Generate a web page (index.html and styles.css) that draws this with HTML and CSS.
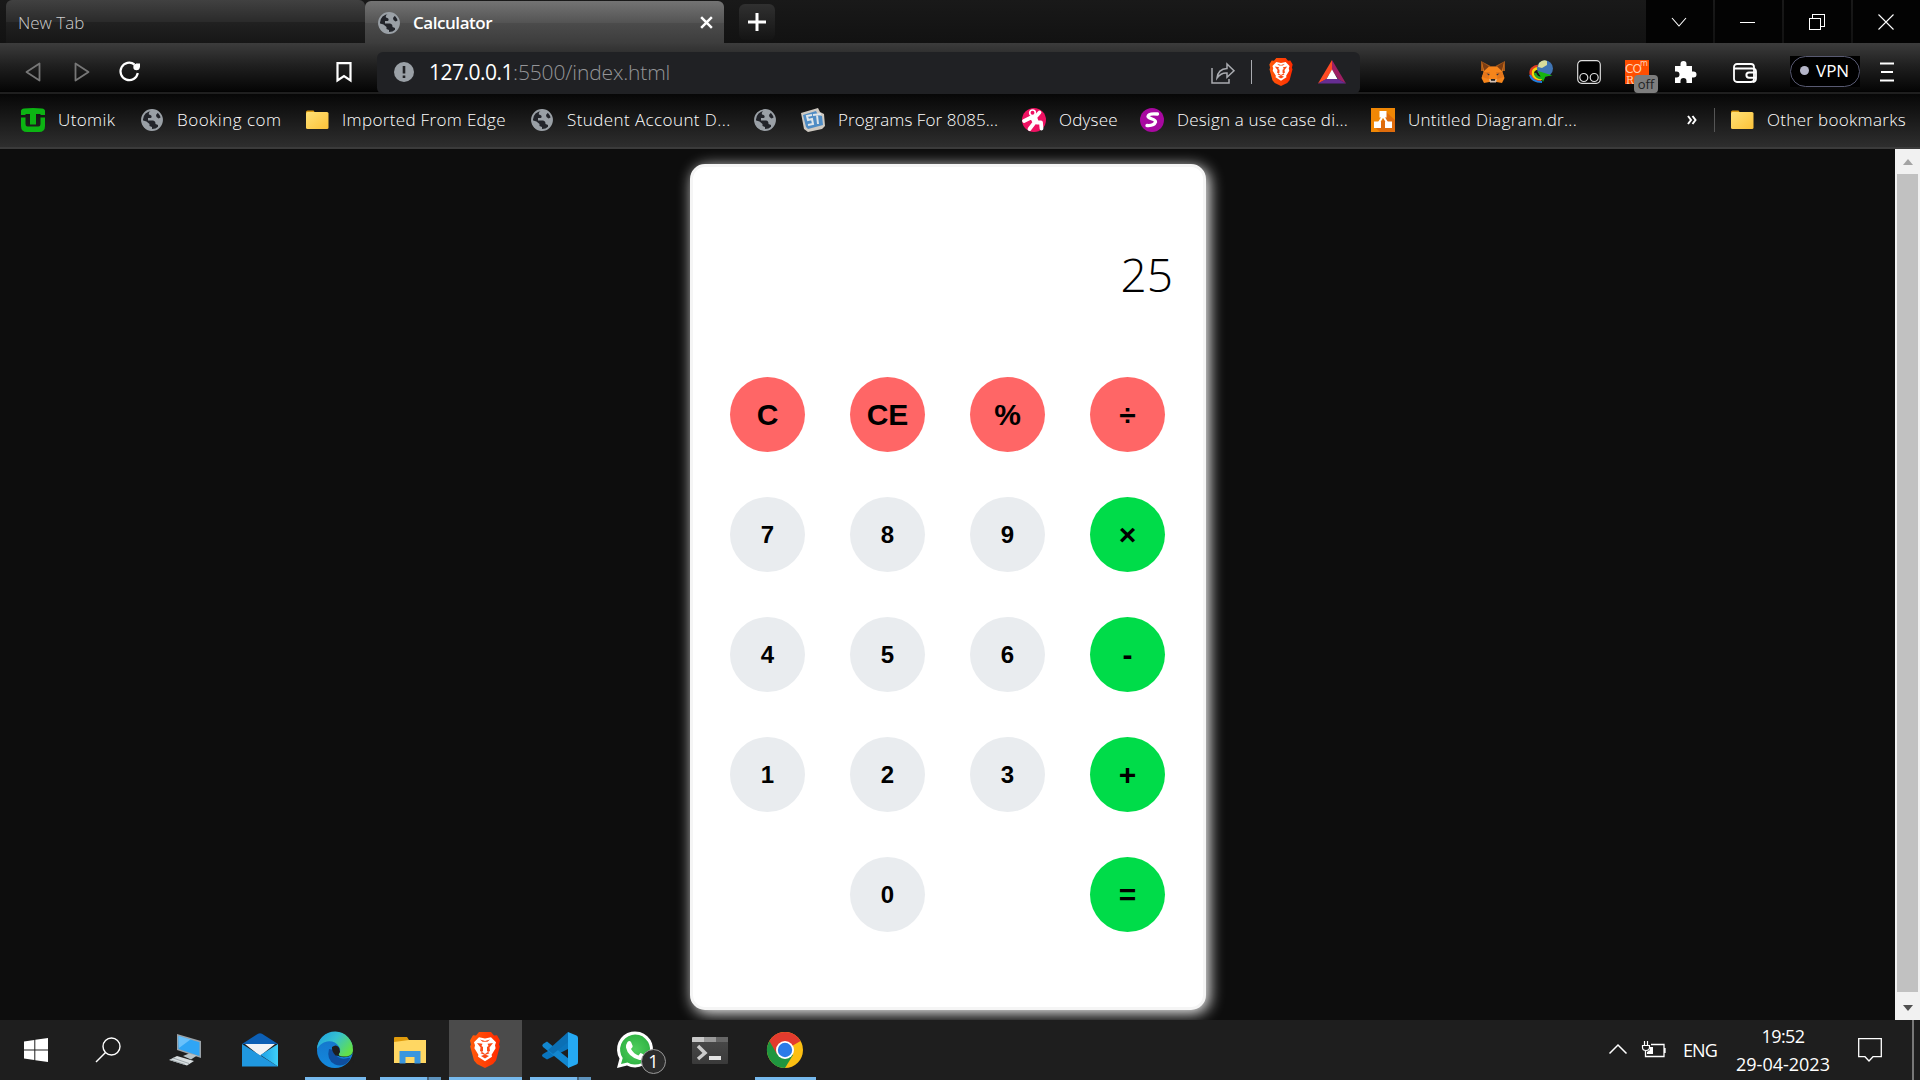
FILE: index.html
```html
<!DOCTYPE html>
<html lang="en">
<head>
<meta charset="utf-8">
<title>Calculator</title>
<link rel="stylesheet" href="styles.css">
</head>
<body>
<svg class="defs" width="0" height="0">
  <defs>
    <symbol id="globe" viewBox="0 0 24 24"><circle cx="12" cy="12" r="10" fill="#22242a" stroke="#9aa0a6" stroke-width="1.8"/><path fill="#9aa0a6" d="M12 1.5C9 4 8.500 5 9 6.500c2 .5 3 1 2.500 2.800-.3 1-2 .8-3.500.8v2.500h5c2 .2 2.600 1.800 2.500 3.400l2.500 1V20A10.500 10.500 0 0 0 22 9l-3.500 1.500-2-1.500-.5-2 2-2.500A10.500 10.500 0 0 0 12 1.500zM1.500 12l5 1.500 3 2.500v2l2.500 1v3.500A10.500 10.500 0 0 1 1.500 12z"/></symbol>
    <symbol id="folder" viewBox="0 0 24 24"><path fill="#d99a12" d="M1 4q0-1.500 1.500-1.500h6L10 4.500V9H1z"/><rect x="1" y="4" width="22.500" height="17" rx="1.500" fill="url(#fold)"/></symbol>
    <symbol id="brave" viewBox="0 0 30 36"><path fill="url(#brv)" d="M9 0h12l3 3.500 3-.3 3 5.300-1 4 .8 2-3.800 14L23 32l-8 4-8-4-3-3.500L.2 14.500 1 12.500 0 8.500l3-5.300 3 .3z"/><path fill="#fff" d="M15 6.500l6-1.200 5 5-1 3 .6 3-4 6.500.4 2-7 4.500-7-4.500.4-2-4-6.500.6-3-1-3 5-5z"/><path fill="#fb4a16" d="M7 11l5.500.8-1 2.200 1.500 1v4l-2.500 2.300 4.500 1.600 4.500-1.600L17 19v-4l1.500-1-1-2.200L23 11l-3.500 4.500.5 3.500-3 1.500L15 22l-2-1.500-3-1.500.5-3.500zM11 24l4-1.500 4 1.500-4 2.500zM10 7.500l5 1.500 5-1.500-2.500 2.300h-5z"/></symbol>
    <linearGradient id="fold" x2="1" y2="1"><stop stop-color="#ffe177"/><stop offset="1" stop-color="#fcc238"/></linearGradient>
    <linearGradient id="brv"><stop stop-color="#ff5a0a"/><stop offset="1" stop-color="#ff2a00"/></linearGradient>
    <linearGradient id="eg" x1="0" y1="0" x2="1" y2=".6"><stop stop-color="#1b9de2"/><stop offset=".5" stop-color="#35c1d0"/><stop offset="1" stop-color="#62e04a"/></linearGradient>
    <linearGradient id="eb" x2="0" y2="1"><stop stop-color="#1572c8"/><stop offset="1" stop-color="#1389de"/></linearGradient>
    <linearGradient id="ml"><stop stop-color="#1c9ee6"/><stop offset="1" stop-color="#3fd0f8"/></linearGradient>
    <linearGradient id="term" x2="0" y2="1"><stop stop-color="#4a4a4a"/><stop offset="1" stop-color="#3a3a3a"/></linearGradient>
    <radialGradient id="wg"><stop stop-color="#4fce5d"/><stop offset="1" stop-color="#32b545"/></radialGradient>
  </defs>
</svg>

<header class="tabstrip">
  <div class="tab">New Tab</div>
  <div class="tab tab-active">
    <svg class="tab-icon"><use href="#globe"/></svg>
    <span class="tab-title">Calculator</span>
    <svg class="tab-close" viewBox="0 0 14 14"><path d="M2 2l10 10M12 2L2 12" stroke="#fff" stroke-width="2.300"/></svg>
  </div>
  <div class="new-tab"><svg width="18" height="18" viewBox="0 0 18 18"><path d="M9 0v18M0 9h18" stroke="#fff" stroke-width="3"/></svg></div>
  <div class="window-buttons">
    <div><svg width="16" height="10" viewBox="0 0 16 10"><path d="M1 1l7 8 7-8"/></svg></div>
    <div><svg width="16" height="10" viewBox="0 0 16 10"><path d="M0 5.500h15" class="crisp"/></svg></div>
    <div><svg width="16" height="16" viewBox="0 0 16 16"><path d="M.5 4.500h11v11H.5zM3.500 4V.5h12v12h-4" class="crisp"/></svg></div>
    <div><svg width="16" height="16" viewBox="0 0 16 16"><path d="M.5 .5l15 15M15.500 .5l-15 15"/></svg></div>
  </div>
</header>

<nav class="toolbar">
  <div class="nav-buttons">
    <svg width="17" height="20" viewBox="0 0 17 20"><path d="M14.500 1.500v17L1.500 10z" fill="none" stroke="#777" stroke-width="1.800" stroke-linejoin="round"/></svg>
    <svg width="17" height="20" viewBox="0 0 17 20"><path d="M2.500 1.500v17L15.500 10z" fill="none" stroke="#777" stroke-width="1.800" stroke-linejoin="round"/></svg>
    <svg class="reload" width="22" height="22" viewBox="0 0 22 22"><path d="M15.500 3.500A8.700 8.700 0 1 0 18.800 12" fill="none" stroke="#fff" stroke-width="2.200"/><circle cx="17.500" cy="6" r="3.200" fill="#fff"/><path d="M17 2.500h4V7z" fill="#fff"/></svg>
  </div>
  <svg class="save" width="16" height="20" viewBox="0 0 16 20"><path d="M1.500 1.200h13v17.300L8 14l-6.500 4.500z" fill="none" stroke="#fff" stroke-width="2.200"/></svg>
  <div class="address">
    <svg width="20" height="20" viewBox="0 0 20 20"><circle cx="10" cy="10" r="10" fill="#9aa0a6"/><path d="M10 4v7.500M10 13.500V16" stroke="#202124" stroke-width="2.600"/></svg>
    <div class="url"><span class="host">127.0.0.1</span><span class="path">:5500/index.html</span></div>
    <svg width="24" height="23" viewBox="0 0 24 23" fill="none" stroke="#a9abb0" stroke-width="1.500"><path d="M1 7v15h17v-4"/><path d="M6 17q1-9 10-9.500V3l7 6.800-7 6.500v-4.300q-6-.5-10 5z"/></svg>
    <i class="divider"></i>
    <svg class="shield" width="24" height="28"><use href="#brave"/></svg>
    <svg class="bat" width="28" height="24" viewBox="0 0 28 24"><path d="M14 0v10L8 19.500 0 23.500z" fill="#ff4b24"/><path d="M14 0l14 23.500-7.500-4L14 10z" fill="#9e1f63"/><path d="M0 23.500L8 19h12l8 4.500z" fill="#662d91"/><path d="M14 9.500l5.500 9.500h-11z" fill="#fff"/></svg>
  </div>
  <div class="extensions">
    <svg viewBox="0 0 24 24"><path fill="#a55a1c" d="M0 1l9.500 5h5L24 1v10H0z"/><path fill="#f6851b" d="M1 3l8 4h6l8-4-1.500 9L23.500 18 21 23l-5.500-1h-7L3 23 .5 18 2.500 12z"/><path fill="#7c3d12" d="M1 2l7 4.500L3 11zM23 2l-7 4.500L21 11z"/><path fill="#e4761b" d="M3 12h6l-1.500 7L1 17zM21 12h-6l1.500 7 6.500-2z"/><path fill="#233447" d="M5.500 13.500l3 .5-.5 1.500zM18.500 13.500l-3 .5.500 1.500z"/><path fill="#d7c1b3" d="M8 19l1 3.500h6l1-3.500-2 1h-4z"/><path fill="#222" d="M10 19h4v1.800h-4z"/></svg>
    <svg viewBox="0 0 24 24"><path d="M10 6Q1 7 2 14t10 6" fill="none" stroke="#e33b22" stroke-width="3"/><path d="M10 8Q3 9 4 14t9 5" fill="none" stroke="#f6d90b" stroke-width="2.500"/><path d="M6 13q1 5 7 5" fill="none" stroke="#23a82a" stroke-width="2.500"/><path d="M1 15q2 7 12 7" fill="none" stroke="#1d7fe2" stroke-width="2"/><circle cx="16" cy="8.500" r="8" fill="#3f74b4"/><path d="M10 3q4-4 8-2l0 4-5 3-4-1z" fill="#d9dc9a"/><path d="M9 11l14.500 4.500-7 1L14 22z" fill="#16b50e"/></svg>
    <svg viewBox="0 0 24 24" fill="none" stroke="#ddd" stroke-width="1.200"><rect x=".7" y=".7" width="22.600" height="22.600" rx="4" fill="#000"/><circle cx="6.800" cy="17.500" r="4"/><circle cx="17.200" cy="17.500" r="4"/></svg>
    <div class="cors"><svg viewBox="0 0 24 24"><path fill="#ff4e00" d="M0 0h24v24H0z"/><g fill="#ffd3b5" font-family="DejaVu Sans"><text x="0" y="13" font-size="12" textLength="17">CO</text><text x="15" y="6" font-size="8">m</text><text x="1" y="23.500" font-size="10.500" font-family="DejaVu Serif">R</text></g></svg><span class="off">off</span></div>
    <svg viewBox="0 0 24 24"><path fill="#fff" d="M2 6h5.500V4a3 3 0 0 1 6 0v2H19v5.500h1.500a3 3 0 0 1 0 6H19V23h-5.500v-2a3 3 0 0 0-6 0v2H2v-5.500h1.500a3 3 0 0 0 0-6H2z"/></svg>
  </div>
  <svg class="wallet" width="24" height="20" viewBox="0 0 24 20" fill="none" stroke="#fff" stroke-width="1.800"><rect x="1" y="1" width="20" height="18" rx="3"/><path d="M1 5.500h18q4 0 4 3v7q0 3-3 3.500"/><path d="M23 9.500h-7a2.600 2.600 0 0 0 0 5.200H23" stroke-width="2"/></svg>
  <div class="vpn-box"><div class="vpn"><i></i><span>VPN</span></div></div>
  <svg class="menu" width="14" height="20" viewBox="0 0 14 20"><path d="M0 1.500h14M1 10h12M0 18.500h14" stroke="#fff" stroke-width="2.200"/></svg>
</nav>

<nav class="bookmarks">
  <a><svg viewBox="0 0 24 24"><path fill="#0cb413" d="M0 7V3Q0 1 3 .5q9-1 18 0 3 .5 3 2.500v4h-4.500V6H15v10.500H9V6H4.500v1zM0 9.500h4.500V16q0 2.500 2 2.500h11q2 0 2-2.500V9.500H24V18q0 6-6 6H6q-6 0-6-6z"/></svg><span class="label utomik">Utomik</span></a>
  <a><svg><use href="#globe"/></svg><span class="label booking">Booking com</span></a>
  <a><svg><use href="#folder"/></svg><span class="label imported">Imported From Edge</span></a>
  <a><svg><use href="#globe"/></svg><span class="label student">Student Account D...</span></a>
  <a><svg><use href="#globe"/></svg></a>
  <a><svg viewBox="0 0 24 24"><path fill="#cfcac2" d="M0 5L17 0l2 4 4 2 1 12-3 3-14 3-4-3z"/><path fill="#4f8cc4" d="M2 7l13-4 2 4 4 1 1 9-15 4-2-2z"/><path d="M11 7l-5 1 1 4 4-1 1 5-5 1M12 7l8-1M16 7l1 9" fill="none" stroke="#dfe6ea" stroke-width="2"/></svg><span class="label programs">Programs For 8085...</span></a>
  <a><svg viewBox="0 0 24 24"><circle cx="12" cy="12" r="12" fill="#ee1162"/><circle cx="10.500" cy="4.800" r="2.800" fill="none" stroke="#fff" stroke-width="1.700"/><path d="M2 13l7-3.500 4 0 4.500-5M10 9.500l2.500 5-5 6.500M13 9l2 5.500h4l.5 6" fill="none" stroke="#fff" stroke-width="3.800" stroke-linecap="round" stroke-linejoin="round"/></svg><span class="label odysee">Odysee</span></a>
  <a><svg viewBox="0 0 24 24"><circle cx="12" cy="12" r="12" fill="#a808a0"/><path d="M17.500 6q-9-1-9.500 2.500c0 2.500 8 2 7.500 5.500Q14 18 7 17.500" fill="none" stroke="#fff" stroke-width="3.300" stroke-linecap="round"/></svg><span class="label design">Design a use case di...</span></a>
  <a><svg viewBox="0 0 24 24"><path fill="#f08705" d="M0 0h24v24H0z"/><path fill="#df6c0c" d="M15 4l9 8v12H9l-5-5 8-7z"/><path d="M12 8l-5 8M12 8l5 8" stroke="#fff" stroke-width="2"/><path fill="#fff" d="M8.500 3h7v6.500h-7zM3 13.500h7V20H3zM14 13.500h7V20h-7z"/></svg><span class="label untitled">Untitled Diagram.dr...</span></a>
  <div class="other">
    <svg class="more" viewBox="0 0 10 10"><path d="M1 1l3 4-3 4M5.500 1l3 4-3 4" fill="none" stroke="#fff" stroke-width="2"/></svg>
    <i></i>
    <a><svg><use href="#folder"/></svg><span class="label rest">Other bookmarks</span></a>
  </div>
</nav>

<main class="page">
  <section class="viewport">
    <div class="calculator">
      <div class="display">25</div>
      <div class="keys">
        <button class="op red">C</button><button class="op red">CE</button><button class="op red percent">%</button><button class="op red">÷</button>
        <button>7</button><button>8</button><button>9</button><button class="op green">×</button>
        <button>4</button><button>5</button><button>6</button><button class="op green">-</button>
        <button>1</button><button>2</button><button>3</button><button class="op green">+</button>
        <button class="zero">0</button><button class="op green equals">=</button>
      </div>
    </div>
  </section>
  <aside class="scrollbar"><i class="up"></i><div class="thumb"></div><i class="down"></i></aside>
</main>

<footer class="taskbar">
  <div class="slot small"><svg width="24" height="24" viewBox="0 0 24 24"><path fill="#fff" d="M0 3.400L10.300 2v9.500H0zM11.300 1.800L24 0v11.500H11.300zM0 12.500h10.300V22L0 20.600zM11.300 12.500H24V24l-12.700-1.800z"/></svg></div>
  <div class="slot search"><svg width="26" height="26" viewBox="0 0 26 26"><circle cx="16.500" cy="9.500" r="8.500" fill="none" stroke="#fff" stroke-width="1.400"/><path d="M10.500 15.500L1 25" stroke="#fff" stroke-width="1.500"/></svg></div>
  <div class="slot"><svg width="32" height="32" viewBox="0 0 32 32"><path fill="#9aa2a8" d="M8 0l24 7v17L8 16z"/><path fill="#2fa5f5" d="M9.500 2l21 6.300v13.800L9.500 15z"/><path fill="#69c1fb" d="M9.500 2l12 3.600L10 14z"/><path fill="#b8c3c7" d="M14 22l6-2.500 8 2-6 4z"/><path fill="#d9dfe1" d="M0 26l8-4 17 5-7 4.500z"/><path d="M4 24l16 5.500M2 26l14 4.500" stroke="#9da6aa"/></svg></div>
  <div class="slot"><svg width="36" height="34" viewBox="0 0 36 34"><path fill="#0c5fb5" d="M0 11L16 .8q2-1.200 4 0L36 11z"/><path fill="#f1f3f6" d="M3 11h30L18 23z"/><path fill="#2098e0" d="M0 11l36 22.500H0z"/><path fill="url(#ml)" d="M36 11v22.500L18.500 22z"/></svg></div>
  <div class="slot wide run"><svg width="36" height="36" viewBox="0 0 36 36"><circle cx="18" cy="18" r="18" fill="url(#eb)"/><path fill="#0f4e9e" d="M12 17q-3 11 6 15.500Q28 36 33 27q1-2-2-1-12 3-14-8z"/><path fill="#1e1e1e" d="M36.500 20q-2 3.500-5 4.500-8 2-12-2-2-3 0-6l5 4 11-6 3 1v5zM34 26.500l3-4-1 8z"/><path fill="url(#eg)" d="M0 17A18 18 0 0 1 36 18c0 6-6 7-10 6.500q-5-.5-4.500-2 3-4 .5-8Q18 8.500 10 9.500 3 11 0 17z"/><path fill="#1e1e1e" d="M15 15q4-3 6.500 0t0 7.500q0 1.500 3 2l-6-1q-4-4-3.500-8.500z"/></svg></div>
  <div class="slot wide run stack"><svg width="33" height="27" viewBox="0 0 33 27"><path fill="#e09b0c" d="M0 1q0-1 1-1h12l2 3v4H0z"/><path fill="#ffd763" d="M0 5l15-2h17v23H0z"/><path fill="#3a96dd" d="M5.500 14h21v12.500h-6V20h-9v6.500h-6z"/></svg></div>
  <div class="slot active"><svg width="30" height="36"><use href="#brave"/></svg></div>
  <div class="slot wide run stack"><svg width="36" height="36" viewBox="0 0 36 36"><path fill="#0a75bd" d="M26 7v10L5 27.500l-4-2.500q-2-1.500 0-3z"/><path fill="#1287d0" d="M1 12l4-2.500L27 27v9L1 15q-1.500-1.500 0-3z"/><path fill="#0b70b5" d="M26 0v10L11 22l-5-4z"/><path fill="#25a9f3" d="M26 0l8.500 3.500Q36 4 36 6v24q0 2-1.500 2.500L26 36z"/></svg></div>
  <div class="slot whatsapp"><svg width="36" height="36" viewBox="0 0 36 36"><path fill="#fff" d="M0 36l2.500-9.500A18 18 0 1 1 10 33.500z"/><path fill="url(#wg)" d="M4 32l1.700-6A15 15 0 1 1 10.500 30.500z"/><path fill="#fff" d="M10.500 10q2-2 3.500 0l1.700 4q.3 1-1.700 3 3 5 7.500 6.500l2-2.500q1 0 5 2.500-.5 5-6 4.500Q11 25 9 15.500q-.2-3 1.500-5.500z"/></svg><span class="badge">1</span></div>
  <div class="slot"><svg width="36" height="27" viewBox="0 0 36 27"><rect width="36" height="27" rx="1" fill="url(#term)"/><path fill="#c8c8c8" d="M0 1q0-1 1-1h11v5H0z"/><path fill="#999" d="M12 0h12v5H12z"/><path fill="#666" d="M24 0h12v5H24z"/><path d="M6 9l7 7-7 6" fill="none" stroke="#ccc" stroke-width="3.500"/><path fill="#e3e3e3" d="M17 19h12v4H17z"/></svg></div>
  <div class="slot wide run"><svg width="36" height="36" viewBox="0 0 36 36"><circle cx="18" cy="18" r="18" fill="#fcbf12"/><path fill="#e33b2e" d="M18 18L2.400 9A18 18 0 0 1 33.600 9z"/><path fill="#1f963f" d="M18 18L2.400 9A18 18 0 0 0 18 36l8-13z"/><path fill="#e33b2e" d="M2.400 9l7.800 13.500L18 9z"/><circle cx="18" cy="18" r="9" fill="#fff"/><circle cx="18" cy="18" r="7.200" fill="#2a7be8"/></svg></div>
  <div class="tray">
    <svg width="18" height="10" viewBox="0 0 18 10"><path d="M.5 9.500L9 1l8.500 8.500" fill="none" stroke="#fff" stroke-width="1.500"/></svg>
    <svg width="24" height="17" viewBox="0 0 24 17"><path d="M9 3.500h13v12H3.500V10M23 7v5" fill="none" stroke="#fff" stroke-width="1.300"/><path d="M.5 4.500h7v2q0 3-3.500 3T.5 6.500zM2.500 0v4M5.500 0v4" fill="none" stroke="#fff" stroke-width="1.200"/><path fill="#fff" d="M8 6h3v7H5v-2l3-2z"/></svg>
    <span class="lang">ENG</span>
    <div class="clock"><span class="time">19:52</span><span>29-04-2023</span></div>
    <svg class="note" width="24" height="24" viewBox="0 0 24 24"><path d="M.7 .7h22.600v18H15L11 23l-4-4.300H.7z" fill="none" stroke="#fff" stroke-width="1.300"/></svg>
    <i class="peek"></i>
  </div>
</footer>
</body>
</html>
```
FILE: styles.css
```css
* { box-sizing: border-box; }
body { margin: 0; width: 1920px; height: 1080px; overflow: hidden; display: flex; flex-direction: column; background: #0d0d0d; color: #fff; font-family: "Open Sans", sans-serif; font-size: 17px; white-space: nowrap; }
svg { display: block; flex: none; overflow: visible; }
.defs { position: absolute; }

.tabstrip { height: 43px; flex: none; display: flex; padding-left: 6px; background: linear-gradient(#191919, #121212); }
.tab { width: 359px; height: 43px; padding-left: 12px; line-height: 45px; font-weight: 300; color: #ccc; border-radius: 6px 6px 0 0; background: linear-gradient(#414141, #2b2b2b 50%, #212121 52%, #161616); }
.tab-active { position: relative; z-index: 1; width: 359px; height: 43px; margin-top: 1px; display: flex; align-items: center; padding: 0 10px 0 12px; line-height: 41px; color: #fff; font-weight: 600; background: linear-gradient(#747474, #545454 50%, #4b4b4b 52%, #3c3c3c); }
.tab-icon { width: 24px; height: 24px; }
.tab-title { flex: 1; margin-left: 12px; letter-spacing: -.45px; }
.tab-close { width: 15px; height: 15px; }
.new-tab { width: 36px; height: 36px; margin: 4px 0 0 15px; border-radius: 6px; display: grid; place-items: center; background: linear-gradient(#303030, #141414); }
.window-buttons { margin-left: auto; display: flex; gap: 2px; }
.window-buttons div { width: 67px; height: 43px; display: grid; place-items: center; background: #030303; }
.window-buttons svg { margin: 0 1px 0 0; }
.window-buttons path { fill: none; stroke: #fff; stroke-width: 1.1; }
.window-buttons .crisp { stroke-width: 1; shape-rendering: crispEdges; }

.toolbar { height: 51px; flex: none; display: flex; align-items: center; padding-left: 25px; background: linear-gradient(#3c3c3c, #1f1f1f 45%, #050505 94%, #000 95%, #1f1f1f 96%); }
.nav-buttons { display: flex; align-items: center; gap: 31px; padding-top: 7px; }
.nav-buttons .reload { margin-left: -2px; }
.save { margin: 7px 0 0 195px; }
.address { width: 983px; height: 42px; margin: 8px 0 0 25px; padding: 0 14px 1px 17px; display: flex; align-items: center; border-radius: 6px; background: #202124; font-size: 21px; }
.url { flex: 1; margin-left: 15px; display: flex; line-height: 28px; }
.host { letter-spacing: -.5px; }
.path { color: #949598; font-weight: 300; letter-spacing: -.15px; }
.divider { width: 1px; height: 24px; margin: 0 17px 0 16px; background: #a9abb0; }
.bat { margin-left: 25px; }
.extensions { display: flex; gap: 24px; margin-left: 121px; padding-top: 7px; }
.extensions svg { width: 24px; height: 24px; }
.cors { position: relative; }
.off { position: absolute; left: 9px; top: 15px; width: 24px; height: 18px; border-radius: 4px; background: #7d7d7d; color: #222; font-size: 13px; line-height: 19px; text-align: center; }
.wallet { margin: 8px 0 0 36px; }
.vpn-box { width: 70px; height: 31px; margin: 5px 0 0 33px; background: #000; }
.vpn { height: 31px; padding: 0 0 2px 9px; display: flex; align-items: center; gap: 7px; border: 1px solid #585a72; border-radius: 16px; background: #000; }
.vpn i { width: 9px; height: 9px; border-radius: 50%; background: #b4b5c8; }
.menu { margin: 6px 0 0 20px; }

.bookmarks { height: 55px; flex: none; display: flex; align-items: center; gap: 24px; padding: 0 14px 1px 21px; border-bottom: 2px solid #3b3b3b; background: linear-gradient(#070707, #2e2e2e); font-weight: 300; }
.bookmarks a { display: flex; align-items: center; gap: 13px; }
.bookmarks a svg { width: 24px; height: 24px; }
.label { margin-top: -2px; }
.utomik { width: 58px; letter-spacing: .4px; }
.booking { width: 104px; letter-spacing: .5px; }
.imported { width: 164px; letter-spacing: .34px; }
.student { width: 162px; letter-spacing: .42px; }
.programs { width: 160px; letter-spacing: .06px; }
.odysee { width: 57px; letter-spacing: .2px; }
.design { width: 170px; letter-spacing: .2px; }
.untitled { width: 168px; letter-spacing: .3px; }
.rest { width: 139px; letter-spacing: .32px; }
.other { margin-left: auto; display: flex; align-items: center; }
.other i { width: 1px; height: 24px; margin: 0 15px 0 17px; background: #555; }
.more { width: 10px; height: 10px; }

.page { height: 871px; flex: none; display: flex; }
.viewport { flex: 1; display: flex; justify-content: center; overflow: hidden; }
.calculator { width: 516px; height: 846px; margin: 15px 0 0 1px; border: 3px solid #f5f5f5; border-radius: 15px; background: #fff; box-shadow: 3px 3px 15px #fff; color: #000; }
.display { height: 210px; padding: 59px 30px 0 0; text-align: right; font-size: 46px; line-height: 96px; font-weight: 300; }
.keys { display: grid; grid-template-columns: repeat(4, 75px); gap: 45px; padding-left: 37px; }
.keys button { width: 75px; height: 75px; padding: 0; border: 0; border-radius: 50%; background: #e9ecef; color: #000; font: bold 24px "Liberation Sans", sans-serif; }
.keys .op { font-size: 30px; }
.keys .red { background: #ff6666; }
.keys .green { background: #00dc49; }
.keys .zero { grid-column: 2; }
.keys .equals { grid-column: 4; }
.scrollbar { width: 25px; display: flex; flex-direction: column; align-items: center; padding-top: 10px; background: #f1f1f1; }
.thumb { width: 21px; height: 818px; margin: 9px 0 13px; background: #c1c1c1; }
.up, .down { border: 5.5px solid transparent; border-top-width: 0; border-bottom: 6px solid #a3a3a3; }
.down { border-bottom-width: 0; border-top: 6px solid #505050; }

.taskbar { height: 60px; flex: none; display: flex; background: #1e1e1e; }
.slot { position: relative; width: 75px; height: 60px; display: grid; place-items: center; padding-right: 1px; }
.small { width: 72px; padding: 0; }
.search { width: 76px; padding-right: 4px; }
.run::after { content: ""; position: absolute; left: 7px; bottom: 0; width: 61px; height: 3px; background: #76b9ed; }
.stack::after { background: linear-gradient(90deg, #76b9ed 47px, #46647c 47px, #46647c 49px, #5e93bd 49px); }
.active { width: 73px; margin: 0 1px; background: #4b4b4b; border-bottom: 3px solid #76b9ed; }
.active svg { margin-top: 3px; }
.badge { position: absolute; left: 43px; top: 29px; width: 25px; height: 25px; border: 1px solid #999; border-radius: 50%; background: #2b2b2b; font: 18px/23px "Open Sans", sans-serif; text-align: center; }
.tray { margin-left: auto; display: flex; align-items: center; font-size: 18px; }
.tray svg { margin: 0 15px 2px 0; }
.lang { width: 34px; margin: 0 19px 0 2px; letter-spacing: -.9px; }
.clock { width: 94px; display: flex; flex-direction: column; align-items: center; line-height: 28px; }
.time { letter-spacing: -.55px; }
.tray .note { margin: 0 0 0 28px; }
.peek { width: 2px; height: 60px; margin: 0 6px 0 30px; background: #777; }
```
